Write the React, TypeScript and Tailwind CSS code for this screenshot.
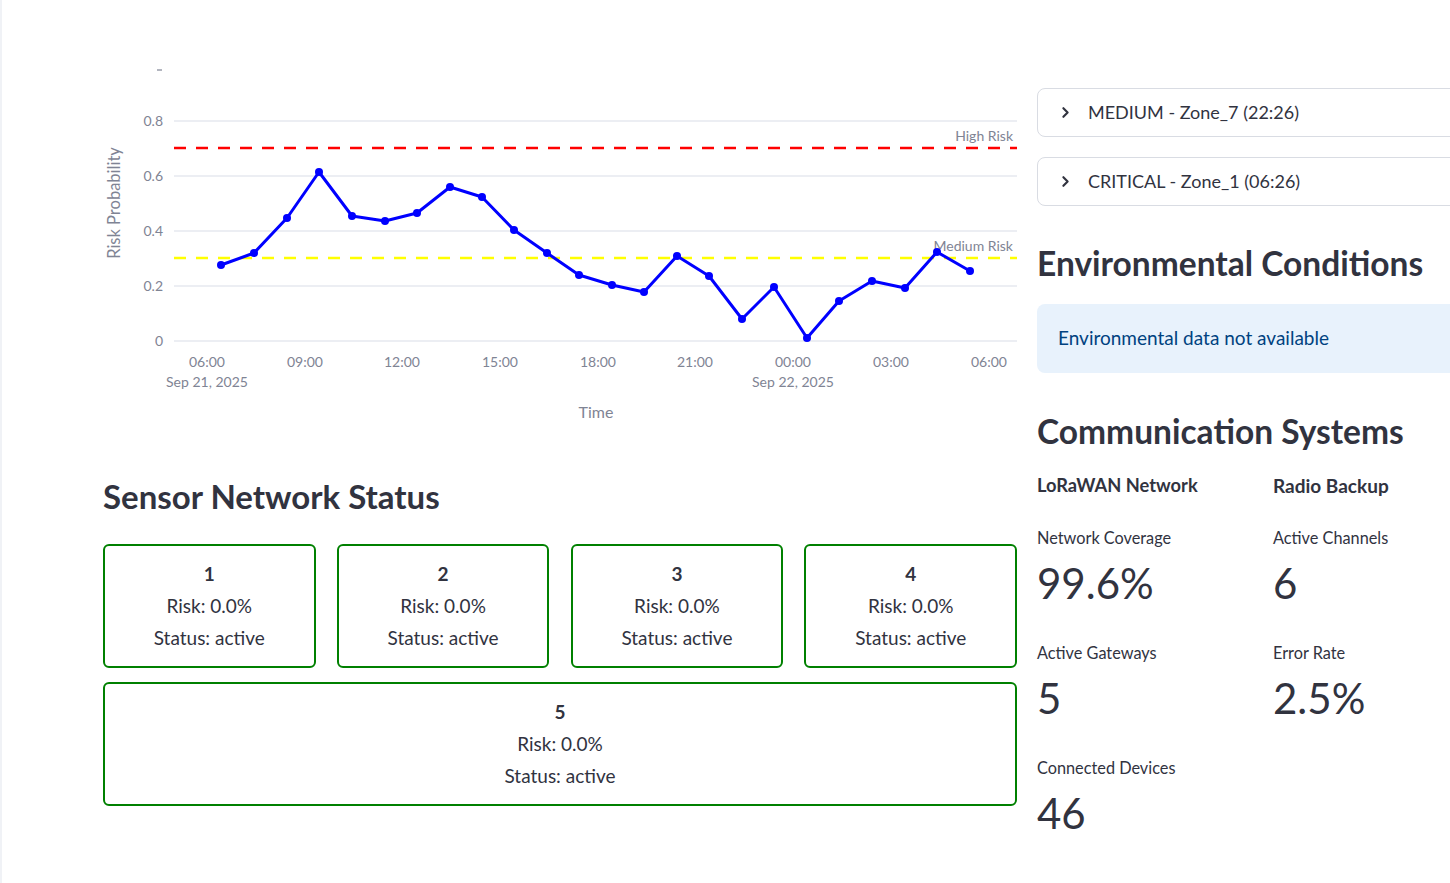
import React from "react";
import { ChevronRight } from "lucide-react";

const FONT = { fontFamily: "Lato, 'Noto Sans', sans-serif" };

const pts: [number, number][] = [
  [221, 265], [254, 253], [287, 218], [319, 172], [352, 216], [385, 221],
  [417, 213], [450, 187], [482, 197], [514, 230], [547, 253], [579, 275],
  [612, 285], [644, 292], [677, 256], [709, 276], [742, 319], [774, 287],
  [807, 338], [839, 301], [872, 281], [905, 288], [937, 252], [970, 271],
];

const yTicks: [string, number][] = [
  ["0.8", 121], ["0.6", 176], ["0.4", 231], ["0.2", 286], ["0", 341],
];

const xTicks: [string, number][] = [
  ["06:00", 207], ["09:00", 305], ["12:00", 402], ["15:00", 500], ["18:00", 598],
  ["21:00", 695], ["00:00", 793], ["03:00", 891], ["06:00", 989],
];

function Chart() {
  const tc = "#7f8494";
  return (
    <svg width={914} height={440} viewBox="103 0 914 440" className="block">
      <line x1={157} x2={162} y1={70} y2={70} stroke={tc} strokeWidth={1.2} />
      {yTicks.map(([l, y]) => (
        <g key={l}>
          <line x1={174} x2={1017} y1={y} y2={y} stroke="#e6e9ef" strokeWidth={1.5} />
          <text x={163} y={y + 5} textAnchor="end" fontSize={14} fill={tc} style={FONT}>{l}</text>
        </g>
      ))}
      <line x1={174} x2={1017} y1={148} y2={148} stroke="#ff0000" strokeWidth={2.5} strokeDasharray="12 10" />
      <line x1={174} x2={1017} y1={258} y2={258} stroke="#ffff00" strokeWidth={2.5} strokeDasharray="12 10" />
      <text x={1013} y={141} textAnchor="end" fontSize={14} fill={tc} style={FONT}>High Risk</text>
      <text x={1013} y={251} textAnchor="end" fontSize={14} fill={tc} style={FONT}>Medium Risk</text>
      <polyline
        points={pts.map((p) => p.join(",")).join(" ")}
        fill="none"
        stroke="#0000ff"
        strokeWidth={3}
        strokeLinejoin="round"
      />
      {pts.map(([x, y], i) => (
        <circle key={i} cx={x} cy={y} r={4} fill="#0000ff" />
      ))}
      {xTicks.map(([l, x], i) => (
        <text key={i} x={x} y={367} textAnchor="middle" fontSize={14} fill={tc} style={FONT}>{l}</text>
      ))}
      <text x={207} y={387} textAnchor="middle" fontSize={14} fill={tc} style={FONT}>Sep 21, 2025</text>
      <text x={793} y={387} textAnchor="middle" fontSize={14} fill={tc} style={FONT}>Sep 22, 2025</text>
      <text x={596} y={418} textAnchor="middle" fontSize={16} fill={tc} style={FONT}>Time</text>
      <text
        x={0}
        y={0}
        transform="translate(120 203) rotate(-90)"
        textAnchor="middle"
        fontSize={16.5}
        fill={tc}
        style={FONT}
      >
        Risk Probability
      </text>
    </svg>
  );
}

function SensorBox({ id }: { id: string }) {
  return (
    <div className="h-[124px] border-2 border-[#008000] rounded-[6px] flex flex-col items-center justify-center text-[#31333f] text-[19px]">
      <div className="h-[32px] flex items-center font-bold">{id}</div>
      <div className="h-[32px] flex items-center">Risk: 0.0%</div>
      <div className="h-[32px] flex items-center">Status: active</div>
    </div>
  );
}

function Expander({ label }: { label: string }) {
  return (
    <div className="h-[49px] border border-[#d9dce3] rounded-[8px] flex items-center pl-[19px] text-[18px] text-[#31333f]">
      <ChevronRight size={17} strokeWidth={3} className="text-[#31333f]" />
      <span className="ml-[14px]">{label}</span>
    </div>
  );
}

function Metric({ label, value, first }: { label: string; value: string; first?: boolean }) {
  return (
    <div className={first ? "mt-[25px]" : "mt-[33px]"}>
      <div className="h-[24px] flex items-center text-[16.3px] text-[#31333f]">{label}</div>
      <div className="h-[50px] mt-[8px] flex items-center text-[42px] text-[#31333f] leading-none">{value}</div>
    </div>
  );
}

export default function App() {
  return (
    <div className="w-[1450px] h-[883px] overflow-hidden bg-white flex" style={FONT}>
      <div className="w-[2px] shrink-0 bg-[#f0f2f6]" />
      <div className="flex pl-[101px] gap-[20px]">
        <div className="w-[914px] shrink-0 flex flex-col">
          <Chart />
          <div className="mt-[32px] h-[50px] flex items-center text-[33px] font-bold text-[#31333f]">
            Sensor Network Status
          </div>
          <div className="mt-[22px] grid grid-cols-4 gap-[21.33px]">
            <SensorBox id="1" />
            <SensorBox id="2" />
            <SensorBox id="3" />
            <SensorBox id="4" />
          </div>
          <div className="mt-[14px]">
            <SensorBox id="5" />
          </div>
        </div>
        <div className="w-[914px] shrink-0 flex flex-col">
          <div className="mt-[88px]">
            <Expander label="MEDIUM - Zone_7 (22:26)" />
          </div>
          <div className="mt-[20px]">
            <Expander label="CRITICAL - Zone_1 (06:26)" />
          </div>
          <div className="mt-[32px] h-[50px] flex items-center text-[33.5px] font-bold text-[#31333f]">
            Environmental Conditions
          </div>
          <div className="mt-[16px] h-[69px] rounded-[8px] bg-[#e8f2fc] flex items-center pl-[21px] text-[19px] text-[#004280]">
            Environmental data not available
          </div>
          <div className="mt-[33px] h-[50px] flex items-center text-[33.5px] font-bold text-[#31333f]">
            Communication Systems
          </div>
          <div className="flex">
            <div className="w-[236px] flex flex-col">
              <div className="mt-[15px] h-[30px] flex items-center text-[18.3px] font-bold text-[#31333f]">LoRaWAN Network</div>
              <Metric label="Network Coverage" value="99.6%" first />
              <Metric label="Active Gateways" value="5" />
              <Metric label="Connected Devices" value="46" />
            </div>
            <div className="w-[236px] flex flex-col">
              <div className="mt-[15px] h-[30px] flex items-center text-[19px] font-bold text-[#31333f]">Radio Backup</div>
              <Metric label="Active Channels" value="6" first />
              <Metric label="Error Rate" value="2.5%" />
            </div>
          </div>
        </div>
      </div>
    </div>
  );
}
